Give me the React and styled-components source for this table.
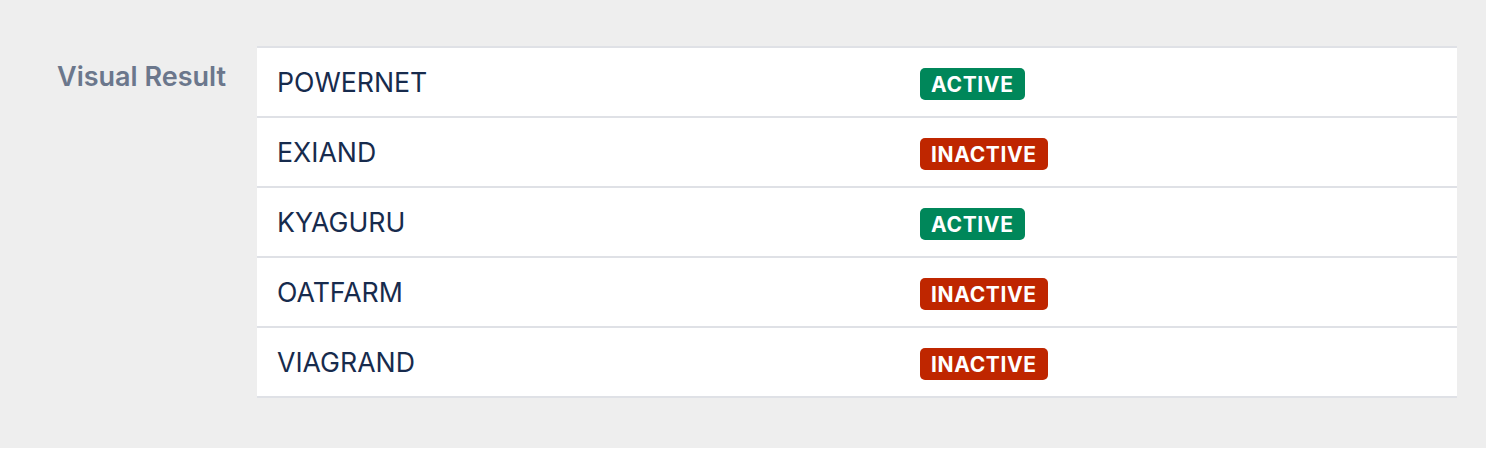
import React from "react";
import styled, { createGlobalStyle } from "styled-components";

const Global = createGlobalStyle`
  html, body { margin: 0; padding: 0; background: #ffffff; }
  body { font-family: Inter, "Noto Sans", "Liberation Sans", sans-serif; -webkit-font-smoothing: antialiased; }
`;

const Page = styled.div`
  display: flex;
  align-items: flex-start;
  height: 448px;
  box-sizing: border-box;
  padding: 46px 29px 0 57px;
  background: #eeeeee;
`;

const Label = styled.div`
  width: 200px;
  flex: none;
  padding-top: 15px;
  font-size: 27px;
  line-height: 32px;
  font-weight: 600;
  color: #6b778c;
`;

const Table = styled.div`
  flex: 1;
  background: #ffffff;
  border-bottom: 2px solid #dfe1e6;
`;

const Row = styled.div`
  display: grid;
  grid-template-columns: 663px 1fr;
  align-items: center;
  height: 68px;
  border-top: 2px solid #dfe1e6;
`;

const Name = styled.div`
  padding-left: 20px;
  font-size: 26.7px;
  color: #172b4d;
  font-weight: 400;
`;

const Badge = styled.span`
  justify-self: start;
  display: inline-flex;
  align-items: center;
  height: 32px;
  margin-top: 4px;
  padding: 0 11px;
  border-radius: 5px;
  font-size: 21px;
  font-weight: 700;
  letter-spacing: 0.65px;
  color: #ffffff;
  background: ${(p) => (p.$active ? "#00875a" : "#bf2600")};
`;

const rows = [
  ["POWERNET", true],
  ["EXIAND", false],
  ["KYAGURU", true],
  ["OATFARM", false],
  ["VIAGRAND", false],
];

export default function App() {
  return (
    <>
      <Global />
      <Page>
        <Label>Visual Result</Label>
        <Table>
          {rows.map(([name, active]) => (
            <Row key={name}>
              <Name>{name}</Name>
              <Badge $active={active}>{active ? "ACTIVE" : "INACTIVE"}</Badge>
            </Row>
          ))}
        </Table>
      </Page>
    </>
  );
}
